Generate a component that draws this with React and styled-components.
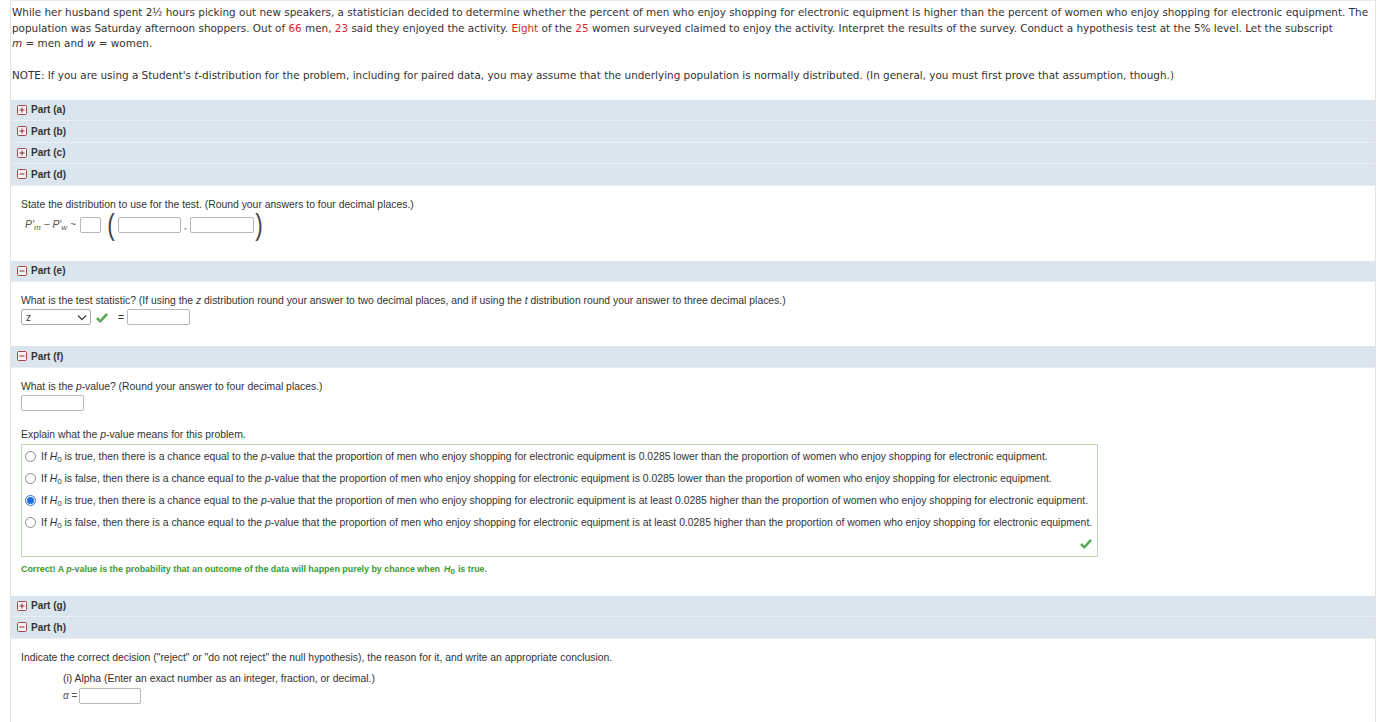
import styled, { createGlobalStyle } from "styled-components";

const Global = createGlobalStyle`
  body {
    margin: 0;
    background: #fff;
  }
`;

const Page = styled.div`
  margin-left: 10px;
  width: 1366px;
  border-left: 1px solid #e3e3e3;
  border-right: 1px solid #e3e3e3;
  border-top: 1px solid #e8e8e8;
  box-sizing: border-box;
`;

const Intro = styled.div`
  font-family: "DejaVu Sans", Verdana, sans-serif;
  font-size: 10.43px;
  line-height: 15.7px;
  color: #333;
  padding: 4px 1px 16px 1px;
  p {
    margin: 0;
  }
  .red {
    color: #d9262e;
  }
  .keep {
    white-space: nowrap;
  }
`;

const Header = styled.div`
  height: 21.5px;
  box-sizing: border-box;
  background: #dbe5ee;
  border-bottom: 1px solid #e9eff4;
  display: flex;
  align-items: center;
  gap: 4px;
  padding-left: 6px;
  font-family: "Liberation Sans", Arial, sans-serif;
  font-weight: bold;
  font-size: 10px;
  color: #333;
`;

const Body = styled.div`
  padding: ${props => props.pad || "12px 10px 20px"};
  font-family: "Liberation Sans", Arial, sans-serif;
  font-size: 10.4px;
  color: #333;
  i {
    font-style: italic;
  }
  sub {
    font-size: 8px;
    vertical-align: -2px;
    line-height: 0;
  }
`;

const Line = styled.div`
  line-height: 13px;
  margin-top: ${props => props.mt || 0}px;
  padding-left: ${props => props.indent || 0}px;
  display: flex;
  align-items: center;
  gap: ${props => props.gap || 0}px;
`;

const Input = styled.div`
  width: ${props => props.w || 62}px;
  height: 16px;
  box-sizing: border-box;
  border: 1px solid #b8b8b8;
  border-radius: 2px;
  background: #fff;
`;

const Paren = styled.span`
  font-family: "Liberation Sans", Arial, sans-serif;
  font-size: 30px;
  font-weight: 300;
  line-height: 26px;
  color: #444;
  transform: scaleX(0.75);
`;

const Select = styled.div`
  width: 70px;
  height: 16px;
  box-sizing: border-box;
  border: 1px solid #a8a8a8;
  border-radius: 2px;
  display: flex;
  align-items: center;
  justify-content: space-between;
  padding: 0 3px 0 4px;
  font-size: 10px;
`;

const Equals = styled.span`
  margin: 0 3px 0 10px;
`;

const ChoiceBox = styled.div`
  margin-top: 3px;
  width: 1077px;
  height: 113px;
  box-sizing: border-box;
  border: 1px solid #c3d7bd;
  padding-top: 1px;
  position: relative;
`;

const Choice = styled.div`
  height: 22px;
  display: flex;
  align-items: center;
  gap: 5px;
  padding-left: 3px;
  white-space: nowrap;
`;

const Radio = styled.span`
  flex: none;
  width: 11px;
  height: 11px;
  box-sizing: border-box;
  border-radius: 50%;
  border: 1px solid ${props => (props.checked ? "#2c6fd6" : "#8a8a8a")};
  background: #fff;
  display: flex;
  align-items: center;
  justify-content: center;
  &::after {
    content: "";
    display: ${props => (props.checked ? "block" : "none")};
    width: 7px;
    height: 7px;
    border-radius: 50%;
    background: #1f6fe0;
  }
`;

const BoxCheck = styled.div`
  position: absolute;
  right: 5px;
  bottom: 5px;
`;

const Correct = styled.div`
  margin-top: 7px;
  color: #3c9a2f;
  font-weight: bold;
  font-size: 8.9px;
  .h {
    margin-left: 4px;
  }
  .tail {
    margin-left: 3px;
  }
`;

const Toggle = ({ open }) => (
  <svg width="10" height="10" viewBox="0 0 10 10">
    <rect x="0.5" y="0.5" width="9" height="9" rx="1" fill="#f3f3f3" stroke="#a24848" />
    <line x1="2.5" y1="5" x2="7.5" y2="5" stroke="#8a2d2d" strokeWidth="1" />
    {!open && <line x1="5" y1="2.5" x2="5" y2="7.5" stroke="#8a2d2d" strokeWidth="1" />}
  </svg>
);

const Check = ({ style }) => (
  <svg width="12" height="11" viewBox="0 0 12 11" style={style}>
    <path d="M1 6 L4.3 9.3 L11 1.8" fill="none" stroke="#5aa957" strokeWidth="2.6" strokeLinejoin="round" />
  </svg>
);

const Chevron = () => (
  <svg width="10" height="7" viewBox="0 0 10 7">
    <path d="M1 1.5 L5 5.5 L9 1.5" fill="none" stroke="#444" strokeWidth="1.3" />
  </svg>
);

const Part = ({ label, open }) => (
  <Header>
    <Toggle open={open} />
    Part ({label})
  </Header>
);

const H0 = () => (
  <>
    <i>H</i>
    <sub>0</sub>
  </>
);

const choices = [
  ["true", "is 0.0285 lower than"],
  ["false", "is 0.0285 lower than"],
  ["true", "is at least 0.0285 higher than"],
  ["false", "is at least 0.0285 higher than"]
];

const App = () => {
  return (
    <>
      <Global />
      <Page>
        <Intro>
          <p>
            While her husband spent 2½ hours picking out new speakers, a statistician decided to
            determine whether the percent of men who enjoy shopping for electronic equipment is
            higher than the percent of women who enjoy shopping for electronic equipment. The
            population was Saturday afternoon shoppers. Out of <span className="red">66</span> men,{" "}
            <span className="red">23</span> said they enjoyed the activity.{" "}
            <span className="red">Eight</span> of the <span className="red">25</span> women surveyed
            claimed to enjoy the activity. Interpret the results of the survey. Conduct a hypothesis
            test at the 5% level. Let the subscript{" "}
            <span className="keep">
              <i>m</i> = men
            </span>{" "}
            and <i>w</i> = women.
          </p>
          <br />
          <p>
            NOTE: If you are using a Student's <i>t</i>-distribution for the problem, including for
            paired data, you may assume that the underlying population is normally distributed. (In
            general, you must first prove that assumption, though.)
          </p>
        </Intro>

        <Part label="a" />
        <Part label="b" />
        <Part label="c" />
        <Part label="d" open />
        <Body pad="12px 10px 23px">
          <Line>State the distribution to use for the test. (Round your answers to four decimal places.)</Line>
          <Line mt={1} indent={4} gap={0}>
            <span style={{ fontStyle: "italic", color: "#555", marginRight: 4 }}>
              P'<sub>m</sub> − P'<sub>w</sub> ~
            </span>
            <Input w={21} />
            <Paren style={{ marginLeft: 5, marginRight: 2 }}>(</Paren>
            <Input w={63} />
            <span style={{ margin: "4px 3px 0", fontSize: 9 }}>,</span>
            <Input w={64} />
            <Paren>)</Paren>
          </Line>
        </Body>

        <Part label="e" open />
        <Body pad="12px 10px 21px">
          <Line>
            <span>
              What is the test statistic? (If using the <i>z</i> distribution round your answer to two
              decimal places, and if using the <i>t</i> distribution round your answer to three decimal
              places.)
            </span>
          </Line>
          <Line mt={2}>
            <Select>
              z
              <Chevron />
            </Select>
            <Check style={{ marginLeft: 5 }} />
            <Equals>=</Equals>
            <Input w={63} />
          </Line>
        </Body>

        <Part label="f" open />
        <Body pad="12px 10px 22px">
          <Line>
            <span>
              What is the <i>p</i>-value? (Round your answer to four decimal places.)
            </span>
          </Line>
          <Line mt={2}>
            <Input w={63} />
          </Line>
          <Line mt={17}>
            <span>
              Explain what the <i>p</i>-value means for this problem.
            </span>
          </Line>
          <ChoiceBox>
            {choices.map(([truth, rel], i) => (
              <Choice key={i}>
                <Radio checked={i === 2} />
                <span>
                  If <H0 /> is {truth}, then there is a chance equal to the <i>p</i>-value that the
                  proportion of men who enjoy shopping for electronic equipment {rel} the proportion of
                  women who enjoy shopping for electronic equipment.
                </span>
              </Choice>
            ))}
            <BoxCheck>
              <Check />
            </BoxCheck>
          </ChoiceBox>
          <Correct>
            Correct! A <i>p</i>-value is the probability that an outcome of the data will happen
            purely by chance when
            <i className="h">H</i>
            <sub>0</sub>
            <span className="tail">is true.</span>
          </Correct>
        </Body>

        <Part label="g" />
        <Part label="h" open />
        <Body pad="12px 10px 18px">
          <Line>
            Indicate the correct decision ("reject" or "do not reject" the null hypothesis), the
            reason for it, and write an appropriate conclusion.
          </Line>
          <Line mt={8} indent={42}>
            (i) Alpha (Enter an exact number as an integer, fraction, or decimal.)
          </Line>
          <Line mt={3} indent={42} gap={2}>
            <span style={{ color: "#555", fontSize: 10 }}>
              <i>α</i> =
            </span>
            <Input w={62} />
          </Line>
        </Body>
      </Page>
    </>
  );
};

export default App;
